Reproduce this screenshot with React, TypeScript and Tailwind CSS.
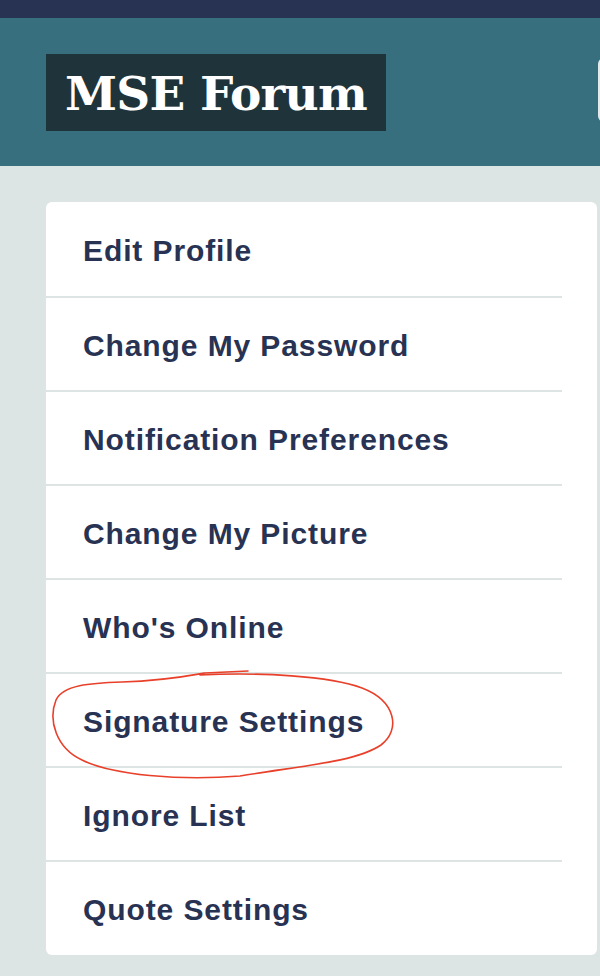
const menuItems = [
  'Edit Profile',
  'Change My Password',
  'Notification Preferences',
  'Change My Picture',
  "Who's Online",
  'Signature Settings',
  'Ignore List',
  'Quote Settings',
];

export default function App() {
  return (
    <div className="relative min-h-[976px] w-[600px] overflow-hidden bg-[#dde5e4]">
      {/* top strip */}
      <div className="h-[18px] bg-[#283253]" />

      {/* header */}
      <div className="flex h-[148px] items-start overflow-hidden bg-[#376f7f] pt-[36px]">
        <div className="ml-[46px] flex h-[77px] w-[340px] shrink-0 items-center justify-center bg-[#1f333b]">
          <span
            className="pt-[2px] text-[47px] font-bold leading-none tracking-[-0.8px] text-white"
            style={{ fontFamily: '"DejaVu Serif", "Liberation Serif", serif' }}
          >
            MSE Forum
          </span>
        </div>
        <div className="ml-[212px] mt-[4px] h-[64px] w-[200px] shrink-0 rounded-md border-2 border-[#e4eaea] bg-[#376f7f]" />
      </div>

      {/* settings menu */}
      <div className="ml-[46px] mt-[36px] w-[551px] rounded-md bg-white">
        {menuItems.map((item, i) => {
          const last = i === menuItems.length - 1;
          const height = i === 0 ? 'h-[96px]' : last ? 'h-[93px]' : 'h-[94px]';
          return (
            <div key={item} className="pr-[35px]">
              <div
                className={`flex items-center pl-[37px] ${height} ${last ? '' : 'border-b-2 border-[#dde5e4]'}`}
              >
                <span
                  className="pt-[2px] text-[30px] font-bold tracking-[0.9px] text-[#283253]"
                  style={{ fontFamily: '"Liberation Sans", Arial, sans-serif' }}
                >
                  {item}
                </span>
              </div>
            </div>
          );
        })}
      </div>

      {/* hand-drawn annotation circle */}
      <svg className="pointer-events-none absolute left-0 top-0" width="600" height="976" viewBox="0 0 600 976">
        <path
          d="M 200 675 C 260 672, 330 676, 362 688 C 396 701, 401 730, 381 745 C 356 762, 300 766, 240 776 C 180 781, 112 775, 82 760 C 56 748, 48 720, 56 700 C 63 685, 90 683, 122 682 C 160 681, 188 676, 205 673 L 248 671"
          fill="none"
          stroke="#e8402a"
          strokeWidth="1.6"
          strokeLinecap="round"
          strokeLinejoin="round"
        />
      </svg>
    </div>
  );
}
